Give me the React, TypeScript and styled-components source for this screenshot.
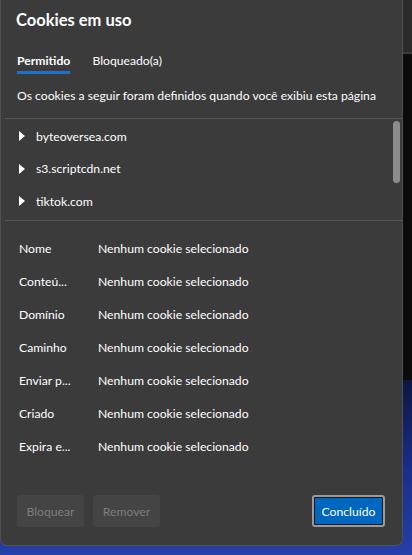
import React from "react";
import styled, { createGlobalStyle } from "styled-components";

const Global = createGlobalStyle`
  html, body { margin: 0; padding: 0; }
  body {
    width: 412px;
    height: 555px;
    overflow: hidden;
    font-family: Lato, "Noto Sans", sans-serif;
    background:
      linear-gradient(to bottom, #2a2a2a 0px, #2a2a2a 52px, #3a3a3a 52px, #3a3a3a 54px, #0b0b0b 54px, #0b0b0b 380px, transparent 380px),
      linear-gradient(to bottom, #0d1640 380px, #1a2e8a 470px, #243fa8 555px);
  }
`;

const Dialog = styled.div`
  box-sizing: border-box;
  width: 403px;
  height: 546px;
  background: #3b3b3b;
  border: 1px solid #505050;
  border-top: none;
  border-radius: 0 0 7px 7px;
  display: flex;
  flex-direction: column;
  color: #ffffff;
`;

const Title = styled.h1`
  margin: 0;
  padding: 9px 0 0 15px;
  height: 32px;
  box-sizing: border-box;
  font-size: 16.5px;
  font-weight: 700;
  line-height: 22px;
  color: #ffffff;
`;

const Tabs = styled.div`
  display: flex;
  gap: 22px;
  padding: 18px 0 0 16px;
  height: 38px;
  box-sizing: border-box;
`;

const Tab = styled.div<{ $active?: boolean }>`
  font-size: 12.2px;
  font-weight: ${(p) => (p.$active ? 700 : 400)};
  line-height: 17px;
  height: 19px;
  color: #ffffff;
  border-bottom: 3px solid ${(p) => (p.$active ? "#1a73c8" : "transparent")};
  padding-top: 2px;
`;

const Description = styled.p`
  margin: 0;
  padding: 17px 0 0 16px;
  height: 48px;
  box-sizing: border-box;
  font-size: 12.2px;
  line-height: 18px;
  color: #ffffff;
`;

const Separator = styled.div`
  height: 1px;
  margin-left: 4px;
  background: #565656;
`;

const ListArea = styled.div`
  position: relative;
  height: 100px;
  display: flex;
  flex-direction: column;
  padding-top: 1px;
`;

const SiteRow = styled.div`
  display: flex;
  align-items: center;
  gap: 11px;
  height: 32.5px;
  padding-left: 18px;
  font-size: 12.2px;
  color: #ffffff;
`;

const Scrollbar = styled.div`
  position: absolute;
  right: 2px;
  top: 2px;
  width: 7px;
  height: 62px;
  border-radius: 4px;
  background: #8c8c8c;
`;

const Details = styled.div`
  display: flex;
  flex-direction: column;
  padding-top: 11px;
`;

const DetailRow = styled.div`
  display: flex;
  align-items: center;
  height: 33px;
  font-size: 12.2px;
  color: #ffffff;
`;

const Label = styled.span`
  width: 79px;
  padding-left: 18px;
  flex-shrink: 0;
`;

const Value = styled.span``;

const Footer = styled.div`
  margin-top: auto;
  display: flex;
  align-items: center;
  gap: 9px;
  padding: 0 17px 18px 16px;
`;

const GhostButton = styled.button`
  height: 32px;
  width: 67px;
  padding: 0;
  border: none;
  border-radius: 3px;
  background: #444444;
  color: #7d7d7d;
  font-family: inherit;
  font-size: 12.2px;
`;

const PrimaryButton = styled.button`
  margin-left: auto;
  box-sizing: border-box;
  height: 32px;
  width: 73px;
  border: 2px solid #9a9a9a;
  outline: 1px solid #1a1a1a;
  outline-offset: -3px;
  border-radius: 3px;
  background: #0067c0;
  color: #ffffff;
  font-family: inherit;
  font-size: 12.2px;
`;

const Caret = () => (
  <svg width="6" height="10" viewBox="0 0 6 10">
    <path d="M0 0 L6 5 L0 10 Z" fill="#ffffff" />
  </svg>
);

const sites = ["byteoversea.com", "s3.scriptcdn.net", "tiktok.com"];
const fields = ["Nome", "Conteú...", "Domínio", "Caminho", "Enviar p...", "Criado", "Expira e..."];

export default function App() {
  return (
    <>
      <Global />
      <Dialog>
        <Title>Cookies em uso</Title>
        <Tabs>
          <Tab $active>Permitido</Tab>
          <Tab>Bloqueado(a)</Tab>
        </Tabs>
        <Description>Os cookies a seguir foram definidos quando você exibiu esta página</Description>
        <Separator />
        <ListArea>
          {sites.map((s) => (
            <SiteRow key={s}>
              <Caret />
              {s}
            </SiteRow>
          ))}
          <Scrollbar />
        </ListArea>
        <Separator />
        <Details>
          {fields.map((f) => (
            <DetailRow key={f}>
              <Label>{f}</Label>
              <Value>Nenhum cookie selecionado</Value>
            </DetailRow>
          ))}
        </Details>
        <Footer>
          <GhostButton>Bloquear</GhostButton>
          <GhostButton>Remover</GhostButton>
          <PrimaryButton>Concluído</PrimaryButton>
        </Footer>
      </Dialog>
    </>
  );
}
